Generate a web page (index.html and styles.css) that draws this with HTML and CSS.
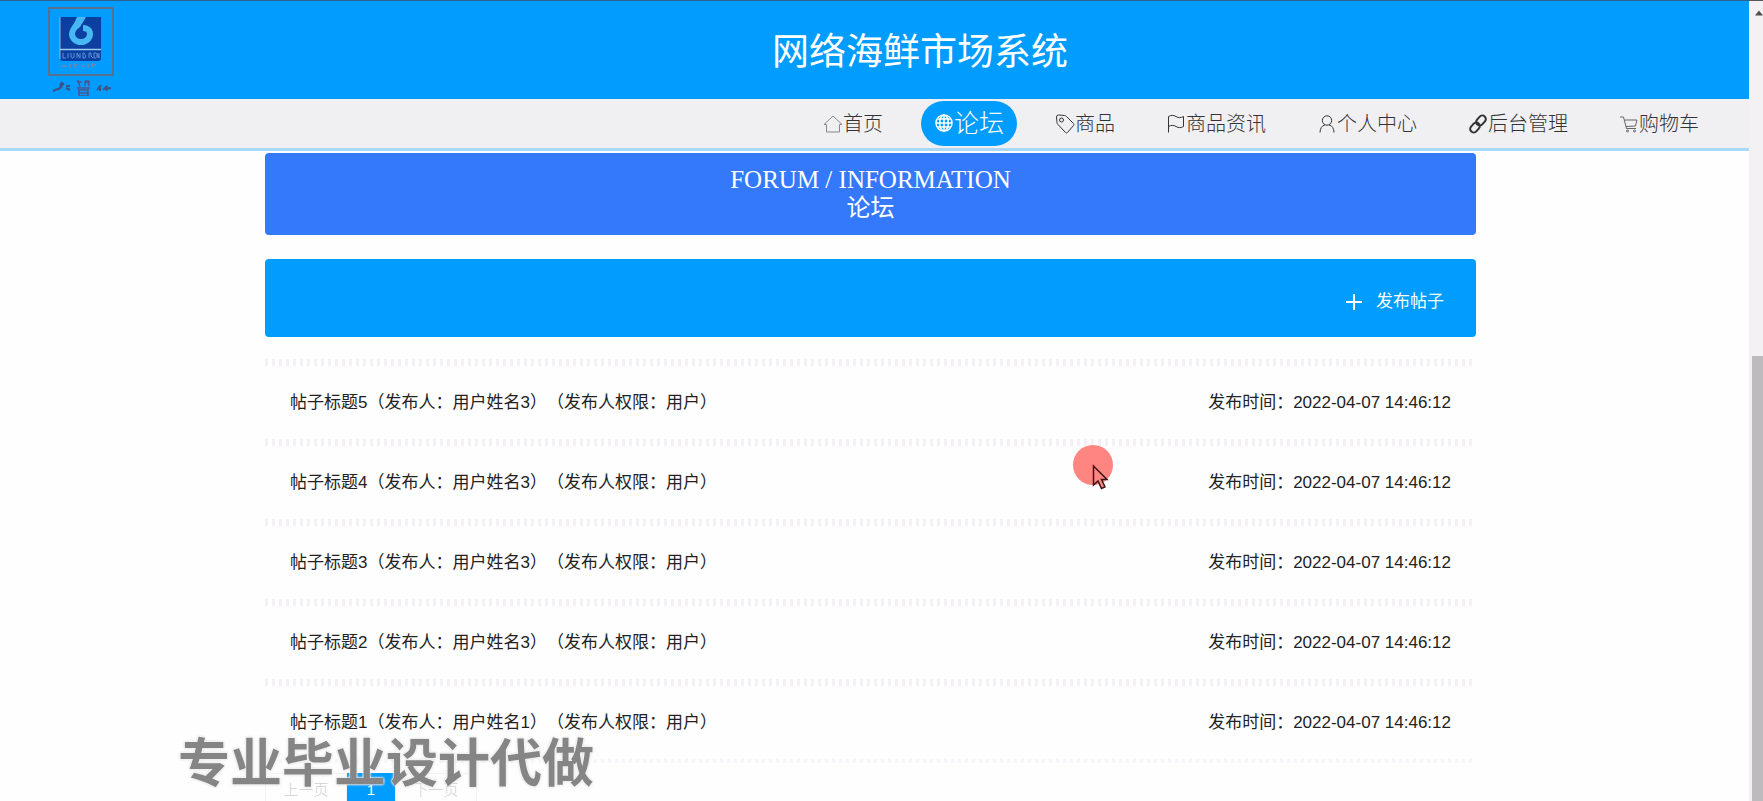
FILE: index.html
```html
<!DOCTYPE html>
<html lang="zh-CN">
<head>
<meta charset="utf-8">
<title>网络海鲜市场系统</title>
<link rel="stylesheet" href="styles.css">
</head>
<body>
<div class="shell">
  <div class="page">
    <header class="header">
      <svg class="logo" viewBox="0 0 70 92" aria-hidden="true">
        <rect x="4" y="4" width="64" height="67" fill="none" stroke="#5b6f8e" stroke-width="2"/>
        <path d="M15 13h41v41q0 3-3 3H18q-3 0-3-3z" fill="#0b3fa0"/>
        <path d="M15 13v42" stroke="#8fb9e8"/>
        <path d="M32 13h9l-6 10-5 4-3-3z" fill="#46b8f4"/>
        <path d="M33 19c-3 4-6 7-6 11a9 8 0 0 0 18 0c0-4-3-6-7-6" fill="none" stroke="#46b8f4" stroke-width="6"/>
        <path d="M15 45.500h41" stroke="#9cccf4" stroke-width="1.500"/>
        <path d="M18 49v5h3m2-5v5m3-5v4q2 2 3 0v-4m3 5v-5l3 5v-5m3 0v5h2q2-3-1-5zm6 5v-5h2v3l2 2m3-5h-2v5h2m1 0v-5l2 5v-5" fill="none" stroke="#5c93dc"/>
        <path d="M16 62h6m3-2v4m3-3h5m-3-2v5m6-2h4m3-3v5m3-3h5m-3-2v5" fill="none" stroke="#7184b0" stroke-width="1.500"/>
        <path d="M8 87l9-4m0-5l-2 4m-2 4l6-7m2 5l4 2m-4-4h4" fill="none" stroke="#3f5286" stroke-width="2"/>
        <path d="M32 78h5m2 0h6m-12-2l2 7m6-7l-1 6m3-6l1 6m-12 2h13m-11 2h9m-9 3h9m-9 3h9m-9-7v7m9-7v7" fill="none" stroke="#4c568d" stroke-width="1.500"/>
        <path d="M52 86l4-5m-1 2v4m3-1l4-4m0 0v5m-2-2l6-1" fill="none" stroke="#3f5286" stroke-width="2"/>
      </svg>
      <h1 class="title">网络海鲜市场系统</h1>
    </header>

    <nav class="nav" aria-label="主导航">
      <a class="nav-link" href="#"><svg class="icon icon-light" viewBox="0 0 20 20" aria-hidden="true"><path d="M1 10.500L10 2l9 8.500h-2.500V18h-13v-7.500z"/></svg>首页</a>
      <a class="nav-link nav-active" href="#" aria-current="page"><svg class="icon icon-globe" viewBox="0 0 20 20" aria-hidden="true"><circle cx="10" cy="10" r="8"/><ellipse cx="10" cy="10" rx="4.300" ry="8"/><path d="M10 2v16M2 10h16M3.500 6h13M3.500 14h13"/></svg>论坛</a>
      <a class="nav-link" href="#"><svg class="icon" viewBox="0 0 20 20" aria-hidden="true"><path d="M1.500 3q0-2 2-2l6 .500q1 0 2 1l7 7q1 1 0 2l-6 7q-1 1-2 0l-7.500-8q-1-1-1-2z"/><circle cx="6.500" cy="6" r="2"/></svg>商品</a>
      <a class="nav-link" href="#"><svg class="icon" viewBox="0 0 20 20" aria-hidden="true"><path d="M2.500 18.500V2.500c2.500-1.500 5-1.500 7.500 0s4.500 1.500 7.500 0v10c-2.500 1.500-5 1.500-7.500 0s-4.500-1.500-7.500 0"/></svg>商品资讯</a>
      <a class="nav-link" href="#"><svg class="icon" viewBox="0 0 20 20" aria-hidden="true"><circle cx="10" cy="6.500" r="4.700"/><path d="M3 18.500c0-4 2-7 5-7.700M17 18.500c0-4-2-7-5-7.700"/></svg>个人中心</a>
      <a class="nav-link" href="#"><svg class="icon icon-bold" viewBox="0 0 20 20" aria-hidden="true"><rect x="-5.500" y="-3.500" width="11" height="7" rx="3.500" transform="translate(13 6.500) rotate(-48)"/><rect x="-5.500" y="-3.500" width="11" height="7" rx="3.500" transform="translate(7 13.500) rotate(-48)"/></svg>后台管理</a>
      <a class="nav-link" href="#"><svg class="icon icon-cart" viewBox="0 0 20 20" aria-hidden="true"><path d="M1 3h3.500l3 11.500H17M5.500 6H18l-1.500 6L7 12.500"/><circle cx="8.500" cy="17" r="1"/><circle cx="15.500" cy="17" r="1"/></svg>购物车</a>
    </nav>

    <main class="content">
      <h2 class="banner"><span class="banner-latin">FORUM / INFORMATION</span><span>论坛</span></h2>

      <div class="toolbar">
        <button class="publish" type="button"><svg class="plus" viewBox="0 0 16 16" aria-hidden="true"><path d="M8 0v16M0 8h16"/></svg>发布帖子</button>
      </div>

      <ul class="posts">
        <li class="post"><a href="#">帖子标题5（发布人：用户姓名3）（发布人权限：用户）</a><span>发布时间：<time>2022-04-07 14:46:12</time></span></li>
        <li class="post"><a href="#">帖子标题4（发布人：用户姓名3）（发布人权限：用户）</a><span>发布时间：<time>2022-04-07 14:46:12</time></span></li>
        <li class="post"><a href="#">帖子标题3（发布人：用户姓名3）（发布人权限：用户）</a><span>发布时间：<time>2022-04-07 14:46:12</time></span></li>
        <li class="post"><a href="#">帖子标题2（发布人：用户姓名3）（发布人权限：用户）</a><span>发布时间：<time>2022-04-07 14:46:12</time></span></li>
        <li class="post"><a href="#">帖子标题1（发布人：用户姓名1）（发布人权限：用户）</a><span>发布时间：<time>2022-04-07 14:46:12</time></span></li>
      </ul>

      <div class="pager">
        <button class="pager-item" type="button" disabled>上一页</button>
        <button class="pager-item pager-current" type="button">1</button>
        <button class="pager-item" type="button" disabled>下一页</button>
      </div>
    </main>
  </div>

  <div class="scrollbar" aria-hidden="true">
    <svg class="scroll-arrow" viewBox="0 0 8 6"><path d="M0 5.500L4 .500l4 5z" fill="#505050"/></svg>
    <div class="thumb"></div>
  </div>

  <div class="watermark">专业毕业设计代做</div>
  <svg class="pointer" viewBox="0 0 40 46" aria-hidden="true">
    <circle cx="20" cy="20" r="20" fill="#ff8581"/>
    <path d="M20.500 21v19l4.500-4 3.500 7.500 3.500-1.700-3.500-7.300h5.500z" fill="#ff8581" stroke="#3a1616" stroke-width="1.500"/>
  </svg>
</div>
</body>
</html>
```
FILE: styles.css
```css
* {
  box-sizing: border-box;
}

body {
  margin: 0;
  color: #222;
  background: #fefefe;
  font: 17px/24px "Liberation Sans", "Noto Sans CJK SC", sans-serif;
  text-spacing-trim: space-all;
}

a {
  color: inherit;
  text-decoration: none;
}

.shell {
  position: relative;
  display: flex;
  height: 100vh;
  overflow: hidden;
}

.page {
  flex: 1;
  min-width: 0;
}

.header {
  display: grid;
  grid-template-columns: 1fr auto 1fr;
  align-items: center;
  height: 99px;
  padding: 0 45px;
  border-top: 1px solid #2b5f8c;
  background: #009dff;
}

.logo {
  width: 70px;
  height: 92px;
}

.title {
  margin: 0 0 0 91px;
  padding-top: 6px;
  color: #fff;
  font-size: 37px;
  font-weight: 400;
  line-height: 56px;
}

.nav {
  display: flex;
  justify-content: flex-end;
  align-items: center;
  gap: 25px;
  height: 52px;
  padding: 0 37px 1px 0;
  border-bottom: 3px solid #a9d8f8;
  background: #f0f0f2;
}

.nav-link {
  display: flex;
  align-items: center;
  height: 45px;
  padding: 2px 13px 0;
  color: #333;
  font-size: 20px;
  font-weight: 300;
  white-space: nowrap;
}

.nav-active {
  padding-top: 0;
  border-radius: 23px;
  color: #fff;
  background: #009dff;
  font-size: 25px;
}

.icon {
  width: 20px;
  height: 20px;
  fill: none;
  stroke: currentColor;
  stroke-width: 1;
}

.icon-light {
  stroke: #888;
}

.icon-cart {
  stroke: #666;
}

.icon-globe {
  stroke-width: 1.5;
}

.icon-bold {
  stroke-width: 2;
}

.content {
  box-sizing: content-box;
  max-width: 1211px;
  margin: 0 auto;
  padding: 2px 8px 0 0;
}

.banner {
  display: flex;
  flex-direction: column;
  align-items: center;
  height: 82px;
  margin: 0 0 24px;
  padding-top: 13px;
  border-radius: 4px;
  color: #fff;
  background: #3379fa;
  font: 400 24px/28px "Liberation Serif", "Noto Sans CJK SC", serif;
}

.banner-latin {
  font-size: 25px;
}

.toolbar {
  display: flex;
  justify-content: flex-end;
  align-items: center;
  height: 78px;
  margin-bottom: 22px;
  padding: 8px 32px 0 0;
  border-radius: 4px;
  background: #009dff;
}

.publish {
  display: flex;
  align-items: center;
  gap: 14px;
  padding: 0;
  border: 0;
  color: #fff;
  background: none;
  font: inherit;
}

.plus {
  width: 16px;
  height: 16px;
  stroke: #fff;
  stroke-width: 2;
}

.posts {
  margin: 0;
  padding: 0;
  list-style: none;
}

.post {
  display: flex;
  justify-content: space-between;
  align-items: center;
  height: 80px;
  padding: 8px 25px 0;
  background: repeating-linear-gradient(90deg, #f3f0f6 0 3px, transparent 3px 7px) top / 100% 7px no-repeat;
}

.posts::after {
  display: block;
  height: 4px;
  background: repeating-linear-gradient(90deg, #f7f5fa 0 3px, transparent 3px 7px);
  content: "";
}

.pager {
  display: flex;
  padding-top: 10px;
}

.pager-item {
  width: 82px;
  height: 34px;
  padding: 0;
  border: 1px solid #f3f3f3;
  color: #d0d0d0;
  background: none;
  font: 300 15px/24px "Liberation Sans", "Noto Sans CJK SC", sans-serif;
}

.pager-current {
  width: 48px;
  border-color: #009dff;
  color: #fff;
  background: #009dff;
}

.scrollbar {
  width: 14px;
  padding-left: 3px;
  border-top: 1px solid #555;
  background: #f3f1f3;
}

.scroll-arrow {
  display: block;
  width: 8px;
  height: 6px;
  margin: 9px 0 0 3px;
}

.thumb {
  height: 100%;
  margin-top: 340px;
  background: #bdbbbe;
}

.watermark {
  position: absolute;
  left: 178px;
  bottom: 3px;
  color: #858585;
  font: 700 52px/76px "Noto Sans CJK SC", sans-serif;
  text-shadow: 0 0 2px #fff, 0 0 2px #fff, 0 0 3px #bbb;
}

.pointer {
  position: absolute;
  top: 445px;
  left: 1073px;
  width: 40px;
  height: 46px;
}
```
